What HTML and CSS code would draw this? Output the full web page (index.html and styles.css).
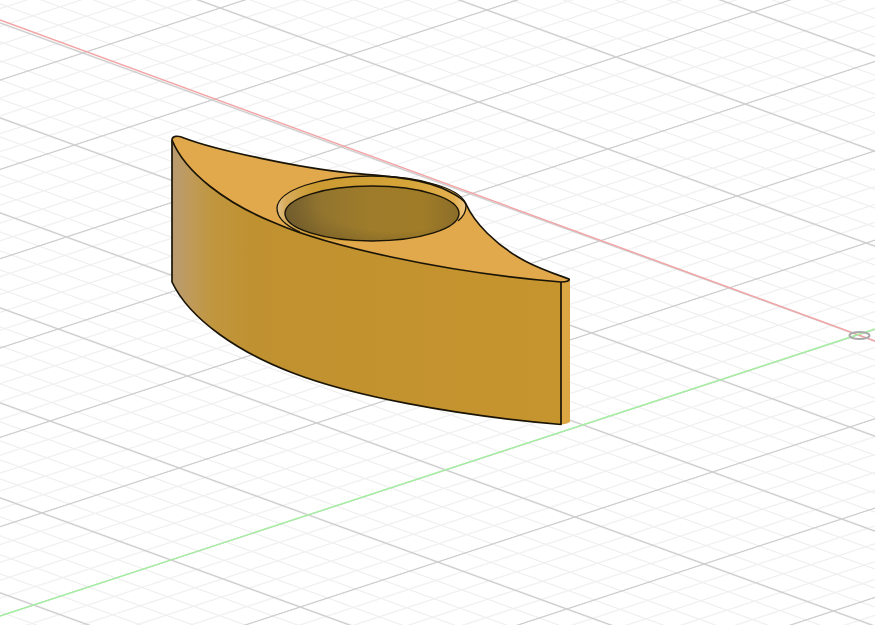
FILE: index.html
```html
<!DOCTYPE html>
<html lang="en">
<head>
<meta charset="utf-8">
<title>3D model viewport</title>
<link rel="stylesheet" href="styles.css">
</head>
<body>
<svg class="viewport" width="875" height="625" viewBox="0 0 875 625" xmlns="http://www.w3.org/2000/svg">
  <defs>
    <pattern id="grid" patternUnits="userSpaceOnUse" width="100" height="100" patternTransform="matrix(-1.292 -0.47 -1.374 0.45 858 335)">
      <path class="minor" d="M20 0V100M40 0V100M60 0V100M80 0V100M0 20H100M0 40H100M0 60H100M0 80H100"/>
      <path class="major" d="M0 0V100M100 0V100M0 0H100M0 100H100"/>
    </pattern>
    <linearGradient id="front" x1="172" y1="0" x2="570" y2="0" gradientUnits="userSpaceOnUse">
      <stop offset="0" stop-color="#b89b72"/>
      <stop offset="0.05" stop-color="#c09a58"/>
      <stop offset="0.1" stop-color="#c0963f"/>
      <stop offset="0.2" stop-color="#c09130"/>
      <stop offset="1" stop-color="#c7952e"/>
    </linearGradient>
    <linearGradient id="floor" x1="284" y1="214" x2="458" y2="214" gradientUnits="userSpaceOnUse">
      <stop offset="0" stop-color="#7a6433"/>
      <stop offset="0.22" stop-color="#93752e"/>
      <stop offset="0.5" stop-color="#9e7c2b"/>
      <stop offset="0.8" stop-color="#a07c28"/>
      <stop offset="1" stop-color="#8c6e2a"/>
    </linearGradient>
    <radialGradient id="floor-shade" cx="395" cy="200" r="120" gradientUnits="userSpaceOnUse" gradientTransform="translate(0 120) scale(1 0.4)">
      <stop offset="0.65" stop-color="#5f4c22" stop-opacity="0"/>
      <stop offset="1" stop-color="#5f4c22" stop-opacity="0.4"/>
    </radialGradient>
    <linearGradient id="lip" x1="276" y1="0" x2="466" y2="0" gradientUnits="userSpaceOnUse">
      <stop offset="0" stop-color="#e0c494"/>
      <stop offset="0.05" stop-color="#d8ac5c"/>
      <stop offset="0.2" stop-color="#cb9a30"/>
      <stop offset="0.7" stop-color="#d6a53a"/>
      <stop offset="0.94" stop-color="#e4b050"/>
      <stop offset="1" stop-color="#f0c987"/>
    </linearGradient>
  </defs>
  <rect class="paper" width="875" height="625"/>
  <rect class="grid" width="875" height="625"/>
  <path class="axis-red" d="M0 20L875 341"/>
  <path class="axis-green" d="M0 616L875 329"/>
  <ellipse class="origin" cx="859.500" cy="335.500" rx="10" ry="3.500"/>

  <path class="face-right" d="M561 282C564 282 568 281.500 570 280L570 422C568 423.500 564 424.500 561 424.500Z"/>
  <path class="face-front" d="M172 140C185 172 225 203 275 223C325 245 440 272 561 282L561 424.500C450 415 350 395 293 373C240 353 190 320 172 282Z"/>
  <path class="face-top" d="M172 140C172 136 178 135 184 138C215 150 300 168 350 173C385 176 425 178 450 192C460 197 464 200 466 204C474 222 495 245 525 261C540 269 555 274 569 279C570 281 566 282 561 282C440 272 325 245 275 223C225 203 185 172 172 140Z"/>
  <path class="lip" d="M300 232C284 225 277 217 277 208C278 190 320 176 371 176C422 176 465 190 466 206C466 212 463 217 458 221C420 246 320 246 300 232Z"/>
  <ellipse class="floor" cx="372" cy="213.500" rx="87" ry="27.500"/>
  <ellipse class="floor-shade" cx="372" cy="213.500" rx="87" ry="27.500"/>
  <ellipse class="rim" cx="372" cy="213.500" rx="87" ry="27.500"/>
  <path class="edge thin" d="M300 232C284 225 277 217 277 208C278 190 320 176 371 176C422 176 465 190 466 206C466 212 463 217 458 221"/>
  <path class="edge" d="M172 140C172 136 178 135 184 138C215 150 300 168 350 173C385 176 425 178 450 192C460 197 464 200 466 204C474 222 495 245 525 261C540 269 555 274 569 279C570 281 566 282 561 282C440 272 325 245 275 223C225 203 185 172 172 140Z"/>
  <path class="edge" d="M172 140V282C190 320 240 353 293 373C350 395 450 415 561 424.500V282"/>
</svg>
</body>
</html>
```
FILE: styles.css
```css
html, body {
  margin: 0;
  padding: 0;
  background: #fff;
}
.viewport {
  display: block;
  filter: blur(0.4px);
}
.paper { fill: #fff; }
.grid { fill: url(#grid); filter: blur(0.5px); }
.minor { fill: none; stroke: #f0f0f0; stroke-width: 1.5; }
.major { fill: none; stroke: #d0d0d0; stroke-width: 1.6; }
.axis-red { fill: none; stroke: #f4a4a4; stroke-width: 1.4; }
.axis-green { fill: none; stroke: #a4f0a0; stroke-width: 1.4; }
.origin { fill: none; stroke: #aaa; stroke-width: 2; }
.face-right { fill: #dca742; }
.face-front { fill: url(#front); }
.face-top { fill: #e1a94b; }
.lip { fill: url(#lip); }
.floor { fill: url(#floor); }
.floor-shade { fill: url(#floor-shade); }
.rim { fill: none; stroke: #1a1407; stroke-width: 1.4; }
.edge { fill: none; stroke: #1a1407; stroke-width: 1.7; stroke-linejoin: round; }
.thin { stroke-width: 1.3; }
```
